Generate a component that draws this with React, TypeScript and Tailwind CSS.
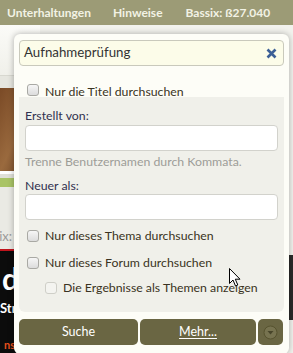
import React from "react";

function Checkbox({ disabled = false }: { disabled?: boolean }) {
  return (
    <span
      className={
        "inline-block w-[12px] h-[12px] rounded-[3px] border shrink-0 " +
        (disabled
          ? "border-[#cfcfc8] bg-[#f4f4f0]"
          : "border-[#a9a9a4] bg-gradient-to-b from-[#f6f6f6] to-[#dcdcdc]")
      }
    />
  );
}

export default function App() {
  const font = { fontFamily: 'Lato, "Liberation Sans", Arial, sans-serif' };
  return (
    <div className="relative w-[293px] h-[353px] overflow-hidden bg-[#f2f2ed]" style={font}>
      {/* top nav */}
      <div className="h-[25px] bg-[#9c9b76] flex items-center text-[12px] font-bold text-[#f2f2e4] whitespace-nowrap">
        <span className="ml-[7px]">Unterhaltungen</span>
        <span className="ml-[22px]">Hinweise</span>
        <span className="ml-[23px]">Bassix: ß27.040</span>
      </div>
      {/* page behind */}
      <div className="flex">
        <div className="w-[40px] flex flex-col">
          <div className="h-[50px] bg-gradient-to-b from-[#fbfbf8] to-[#f0f0ea]" />
          <div className="h-[13px] bg-[#e6e6df] border-t border-[#d8d8d0]" />
          <div className="h-[83px] bg-gradient-to-br from-[#7a4a26] via-[#9a6a3e] to-[#5e3a1e]" />
          <div className="h-[3px] bg-white" />
          <div className="h-[4px] bg-[#e0e0d8]" />
          <div className="h-[9px] bg-[#a9c465]" />
          <div className="h-[62px] bg-[#eaeae4] relative">
            <span className="absolute right-[28px] top-[40px] text-[13px] text-[#9a9a9a]">ix:</span>
          </div>
          <div className="h-[2px] bg-[#c0141c]" />
          <div className="h-[105px] bg-[#0c0c0c] relative">
            <span className="absolute left-[2px] top-[12px] text-[30px] font-bold text-white leading-none">d</span>
            <span className="absolute left-[0px] top-[48px] text-[13px] font-bold text-white">Str</span>
            <span className="absolute left-[4px] top-[88px] text-[11px] font-bold text-[#e8501c] leading-none">ns</span>
          </div>
        </div>
        <div className="flex-1 flex flex-col">
          <div className="h-[230px]" />
          <div className="h-[65px] bg-[#2a2a2a]" />
        </div>
      </div>

      {/* search dropdown panel */}
      <div className="absolute left-[14px] top-[34px] w-[275px] h-[320px] bg-[#fdfdf7] rounded-[6px] shadow-[0_0_6px_rgba(0,0,0,0.3)] px-[5px] pt-[6px]">
        <div className="h-[26px] rounded-[4px] border border-[#c9c9bc] bg-[#fcfce9] flex items-center pl-[4px] pr-[6px] text-[13.3px] text-[#333]">
          <span className="flex-1">Aufnahmeprüfung</span>
          <svg width="11" height="11" viewBox="0 0 11 11">
            <path d="M1.5 1.5 L9.5 9.5 M9.5 1.5 L1.5 9.5" stroke="#3c5f96" strokeWidth="2.6" strokeLinecap="butt" />
          </svg>
        </div>
        <div className="h-[31px] flex items-start pt-[18px] pl-[8px] gap-[6px] text-[12.3px] text-[#3a3322] leading-[15px]">
          <Checkbox />
          <span className="mt-[0px]">Nur die Titel durchsuchen</span>
        </div>
        <div className="relative bg-[#f0f0ea] rounded-b-[6px] h-[215px] px-[6px] pt-[11px] text-[12.3px]">
          <div className="leading-[16px] text-[#30304f]">Erstellt von:</div>
          <div className="mt-[1px] h-[26px] rounded-[4px] border border-[#d2d2cc] bg-white" />
          <div className="mt-[3px] leading-[16px] text-[#9d9d98]">Trenne Benutzernamen durch Kommata.</div>
          <div className="mt-[8px] leading-[16px] text-[#30304f]">Neuer als:</div>
          <div className="mt-[0px] h-[26px] rounded-[4px] border border-[#d2d2cc] bg-white" />
          <div className="mt-[8px] flex items-center gap-[6px] pl-[2px] leading-[15px] text-[#3a3322]">
            <Checkbox />
            <span>Nur dieses Thema durchsuchen</span>
          </div>
          <div className="mt-[12px] flex items-center gap-[6px] pl-[2px] leading-[15px] text-[#3a3322]">
            <Checkbox />
            <span>Nur dieses Forum durchsuchen</span>
          </div>
          <div className="mt-[10px] flex items-center gap-[6px] pl-[20px] leading-[15px] text-[#3a3322] whitespace-nowrap">
            <Checkbox disabled />
            <span>Die Ergebnisse als Themen anzeigen</span>
          </div>
        </div>
        <div className="mt-[7px] flex h-[26px] gap-[2px] text-[12.5px] text-white">
          <div className="w-[119px] rounded-[5px] bg-[#6a6643] flex items-center justify-center">Suche</div>
          <div className="w-[116px] rounded-[5px] bg-[#6a6643] flex items-center justify-center">
            <span className="underline underline-offset-2">Mehr...</span>
          </div>
          <div className="w-[25px] rounded-[5px] bg-[#6a6643] flex items-center justify-center">
            <svg width="15" height="15" viewBox="0 0 15 15">
              <circle cx="7.5" cy="7.5" r="6.5" fill="#777350" stroke="#57532f" strokeWidth="1" />
              <path d="M4.5 6 L10.5 6 L7.5 9.5 Z" fill="#48452a" />
            </svg>
          </div>
        </div>
      </div>

      {/* mouse cursor */}
      <svg className="absolute left-[229px] top-[268px]" width="13" height="20" viewBox="0 0 13 20">
        <path d="M0.5 0.5 L0.5 15.5 L4 12 L6.5 18 L8.8 17 L6.3 11.2 L11 11.2 Z" fill="white" stroke="black" strokeWidth="1" strokeLinejoin="miter" />
      </svg>
    </div>
  );
}
